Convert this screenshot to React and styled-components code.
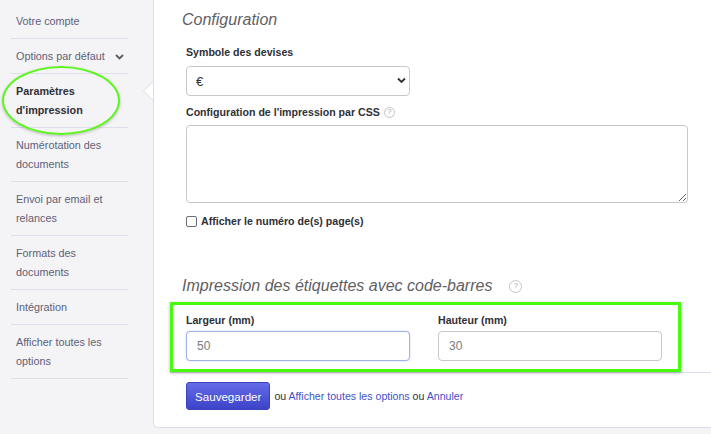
import React from 'react';
import styled, { createGlobalStyle } from 'styled-components';

const GlobalStyle = createGlobalStyle`
	html, body {
		margin: 0;
		padding: 0;
		background: #f4f4f6;
		font-family: "Liberation Sans", Arial, sans-serif;
		overflow: hidden;
	}
`;

const Page = styled.div`
	display: flex;
	align-items: flex-start;
	width: 711px;
	height: 434px;
	overflow: hidden;
`;

const Sidebar = styled.nav`
	width: 153px;
	flex-shrink: 0;
	padding-top: 4px;
	box-sizing: border-box;
`;

const NavItem = styled.div`
	position: relative;
	display: flex;
	align-items: center;
	justify-content: space-between;
	margin-left: 11px;
	width: 117px;
	box-sizing: border-box;
	padding: 8px 4px 7px 5px;
	border-bottom: 1px solid #dcdeea;
	font-size: 10.8px;
	line-height: 19px;
	color: ${p => (p.active ? '#2f3036' : '#5d6179')};
	font-weight: ${p => (p.active ? 'bold' : 'normal')};
`;

const Circled = styled.span`
	position: absolute;
	left: -9px;
	top: -8px;
	width: 118px;
	height: 69px;
	border: 2px solid #5cf51e;
	border-radius: 50%;
	box-sizing: border-box;
	box-shadow: 0 1px 3px rgba(0, 0, 0, 0.25);
	pointer-events: none;
`;

const Panel = styled.main`
	position: relative;
	flex: 1;
	height: 428px;
	box-sizing: border-box;
	background: #fff;
	border-left: 1px solid #dadce6;
	border-bottom: 1px solid #dadce6;
	border-bottom-left-radius: 5px;
	padding: 0 0 0 32px;
`;

const Pointer = styled.span`
	position: absolute;
	left: -11px;
	top: 81px;
	width: 0;
	height: 0;
	border-top: 10px solid transparent;
	border-bottom: 10px solid transparent;
	border-right: 10px solid #dadce6;
	&::after {
		content: '';
		position: absolute;
		left: 1px;
		top: -9px;
		border-top: 9px solid transparent;
		border-bottom: 9px solid transparent;
		border-right: 9px solid #fff;
	}
`;

const Heading = styled.h2`
	margin: ${p => p.top}px 0 0 -4px;
	font-size: 16px;
	line-height: 20px;
	font-weight: normal;
	font-style: italic;
	color: #5f6064;
	display: flex;
	align-items: center;
	gap: 17px;
`;

const Label = styled.label`
	display: flex;
	align-items: center;
	gap: 4px;
	margin-top: ${p => p.top || 0}px;
	font-size: 10.6px;
	line-height: 14px;
	font-weight: bold;
	color: #2f3036;
`;

const Help = styled.span`
	display: inline-flex;
	align-items: center;
	justify-content: center;
	width: ${p => p.size || 11}px;
	height: ${p => p.size || 11}px;
	border: 1px solid #c4c4c8;
	border-radius: 50%;
	font-size: 7px;
	font-weight: normal;
	font-style: normal;
	color: #9a9a9e;
	box-sizing: border-box;
`;

const SelectWrap = styled.div`
	position: relative;
	width: 224px;
	margin-top: 7px;
`;

const Select = styled.select`
	appearance: none;
	width: 100%;
	height: 30px;
	box-sizing: border-box;
	border: 1px solid #c8c8cc;
	border-radius: 4px;
	background: #fff;
	padding: 0 0 0 9px;
	font-family: inherit;
	font-size: 13px;
	color: #2f3036;
	outline: none;
`;

const Chevron = styled.svg`
	position: absolute;
	right: 4px;
	top: 11px;
	pointer-events: none;
`;

const TextArea = styled.textarea`
	display: block;
	width: 502px;
	height: 78px;
	margin-top: 6px;
	box-sizing: border-box;
	border: 1px solid #c8c8cc;
	border-radius: 4px;
	font-family: inherit;
	outline: none;
`;

const Check = styled.input`
	appearance: none;
	width: 11px;
	height: 11px;
	margin: 0;
	border: 1px solid #6d6d72;
	border-radius: 2px;
	background: #fff;
`;

const FieldRow = styled.div`
	position: relative;
	display: flex;
	gap: 28px;
	margin-top: 17px;
	width: 476px;
`;

const Field = styled.div`
	display: flex;
	flex-direction: column;
	gap: 4px;
	width: 224px;
`;

const Input = styled.input`
	height: 30px;
	box-sizing: border-box;
	border: 1px solid ${p => (p.focused ? '#9fb0ea' : '#c8c8cc')};
	box-shadow: ${p => (p.focused ? '0 0 2px rgba(90, 120, 230, 0.35)' : 'none')};
	border-radius: 4px;
	padding: 0 10px;
	font-family: inherit;
	font-size: 12px;
	color: #7a7a7e;
	outline: none;
`;

const Highlight = styled.span`
	position: absolute;
	left: -16px;
	top: -11px;
	right: -19px;
	bottom: -11px;
	border: 3px solid #48fa0c;
	box-shadow: 0 1px 3px rgba(0, 0, 0, 0.3);
	pointer-events: none;
`;

const Divider = styled.hr`
	margin: 11px 0 0 -16px;
	border: none;
	border-top: 1px solid #dadce6;
`;

const Actions = styled.div`
	display: flex;
	align-items: center;
	gap: 4px;
	margin-top: 9px;
	font-size: 10.6px;
	color: #2f3036;
`;

const SaveButton = styled.button`
	height: 28px;
	padding: 0 8px;
	border: 1px solid #3b41b8;
	border-radius: 3px;
	background: linear-gradient(#646be9, #3c43c8);
	color: #fff;
	font-family: inherit;
	font-size: 11.6px;
`;

const Link = styled.a`
	color: #3f51c6;
	text-decoration: none;
`;

const navItems = [
	['Votre compte'],
	['Options par défaut'],
	['Paramètres', "d'impression"],
	['Numérotation des', 'documents'],
	['Envoi par email et', 'relances'],
	['Formats des', 'documents'],
	['Intégration'],
	['Afficher toutes les', 'options']
];

const App = () => {
	return (
		<Page>
			<GlobalStyle />
			<Sidebar>
				{navItems.map((lines, i) => (
					<NavItem key={i} active={i === 2}>
						<span>
							{lines.map((l, j) => (
								<React.Fragment key={j}>
									{j > 0 && <br />}
									{l}
								</React.Fragment>
							))}
						</span>
						{i === 1 && (
							<svg width="9" height="6" viewBox="0 0 9 6">
								<path d="M1 1l3.5 3.5L8 1" fill="none" stroke="#5a5b62" strokeWidth="1.8" />
							</svg>
						)}
						{i === 2 && <Circled />}
					</NavItem>
				))}
			</Sidebar>
			<Panel>
				<Pointer />
				<Heading top={10}>Configuration</Heading>
				<Label top={15}>Symbole des devises</Label>
				<SelectWrap>
					<Select defaultValue="eur">
						<option value="eur">€</option>
					</Select>
					<Chevron width="9" height="7" viewBox="0 0 9 7">
						<path d="M1 1.5l3.5 3.5L8 1.5" fill="none" stroke="#2f3036" strokeWidth="1.8" />
					</Chevron>
				</SelectWrap>
				<Label top={9}>
					Configuration de l'impression par CSS <Help>?</Help>
				</Label>
				<TextArea />
				<Label top={11}>
					<Check type="checkbox" /> Afficher le numéro de(s) page(s)
				</Label>
				<Heading top={48}>
					Impression des étiquettes avec code-barres <Help size={13}>?</Help>
				</Heading>
				<FieldRow>
					<Field>
						<Label>Largeur (mm)</Label>
						<Input focused defaultValue="50" />
					</Field>
					<Field>
						<Label>Hauteur (mm)</Label>
						<Input defaultValue="30" />
					</Field>
					<Highlight />
				</FieldRow>
				<Divider />
				<Actions>
					<SaveButton>Sauvegarder</SaveButton>
					<span>
						ou <Link href="#">Afficher toutes les options</Link> ou <Link href="#">Annuler</Link>
					</span>
				</Actions>
			</Panel>
		</Page>
	);
};

export default App;
